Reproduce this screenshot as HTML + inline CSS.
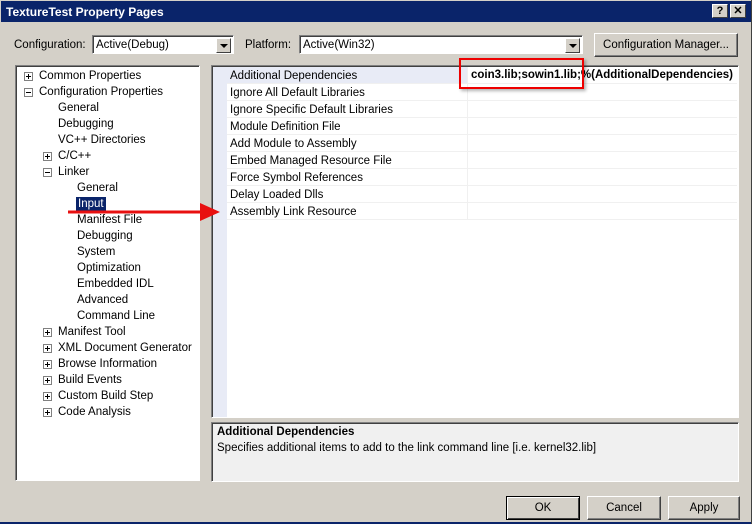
<!DOCTYPE html>
<html><head><style>
*{margin:0;padding:0;box-sizing:border-box}
body{width:752px;height:524px;background:#d4d0c8;font-family:"Liberation Sans",sans-serif;font-size:11.5px;color:#000;position:relative;overflow:hidden}
.a{position:absolute;white-space:nowrap}
.title{left:0;top:0;width:752px;height:23px;background:#0a246a;border:1px solid #d4d0c8;}
.title span{position:absolute;left:5px;top:4px;color:#fff;font-weight:bold;font-size:12px}
.tb{position:absolute;top:3px;width:16px;height:14px;background:#d4d0c8;border:1px solid;border-color:#fff #404040 #404040 #fff;font-size:11px;font-weight:bold;text-align:center;line-height:12px}
.combo{background:#fff;border:1px solid;border-color:#808080 #fff #fff #808080;box-shadow:inset 1px 1px 0 #404040;height:19px;padding:3px 3px}
.dd{position:absolute;right:2px;top:2px;width:15px;height:15px;background:#d4d0c8;border:1px solid;border-color:#fff #404040 #404040 #fff}
.dd:after{content:"";position:absolute;left:3px;top:5px;border:4px solid transparent;border-top:4px solid #000;border-bottom:0}
.btn{background:#d4d0c8;border:1px solid;border-color:#fff #404040 #404040 #fff;box-shadow:inset -1px -1px 0 #808080;text-align:center;line-height:22px;height:24px}
.panel{background:#fff;border:1px solid;border-color:#808080 #fff #fff #808080;box-shadow:inset 1px 1px 0 #404040}
.ex{position:absolute;width:9px;height:9px;border:1px solid #808080;background:#fff}
.ex:before{content:"";position:absolute;left:1px;top:3px;width:5px;height:1px;background:#000}
.ex.p:after{content:"";position:absolute;left:3px;top:1px;width:1px;height:5px;background:#000}
.row{position:absolute;left:227px;width:510px;height:17px;border-bottom:1px solid #f0f0f0}
.row span{position:absolute;left:3px;top:3px}
</style></head><body>
<div class="a title"><span>TextureTest Property Pages</span>
<div class="tb" style="left:711px">?</div><div class="tb" style="left:729px">✕</div></div>
<div class="a" style="left:0;top:522px;width:752px;height:2px;background:#0a246a"></div>
<div class="a" style="left:751px;top:0;width:1px;height:524px;background:#404040"></div>

<div class="a" style="left:14px;top:39px">Configuration:</div>
<div class="a combo" style="left:92px;top:35px;width:142px">Active(Debug)<div class="dd"></div></div>
<div class="a" style="left:245px;top:39px">Platform:</div>
<div class="a combo" style="left:299px;top:35px;width:284px">Active(Win32)<div class="dd"></div></div>
<div class="a btn" style="left:594px;top:33px;width:144px">Configuration Manager...</div>

<div class="a panel" style="left:15px;top:65px;width:185px;height:416px"></div>
<div class="a" style="left:0;top:2px;width:1px;height:1px">
<div class="a ex p" style="left:24px;top:70px"></div><div class="a" style="left:39px;top:68px">Common Properties</div>
<div class="a ex" style="left:24px;top:86px"></div><div class="a" style="left:39px;top:84px">Configuration Properties</div>
<div class="a" style="left:58px;top:100px">General</div>
<div class="a" style="left:58px;top:116px">Debugging</div>
<div class="a" style="left:58px;top:132px">VC++ Directories</div>
<div class="a ex p" style="left:43px;top:150px"></div><div class="a" style="left:58px;top:148px">C/C++</div>
<div class="a ex" style="left:43px;top:166px"></div><div class="a" style="left:58px;top:164px">Linker</div>
<div class="a" style="left:77px;top:180px">General</div>
<div class="a" style="left:76px;top:195px;background:#0a246a;color:#fff;padding:1px 2px;">Input</div>
<div class="a" style="left:77px;top:212px">Manifest File</div>
<div class="a" style="left:77px;top:228px">Debugging</div>
<div class="a" style="left:77px;top:244px">System</div>
<div class="a" style="left:77px;top:260px">Optimization</div>
<div class="a" style="left:77px;top:276px">Embedded IDL</div>
<div class="a" style="left:77px;top:292px">Advanced</div>
<div class="a" style="left:77px;top:308px">Command Line</div>
<div class="a ex p" style="left:43px;top:326px"></div><div class="a" style="left:58px;top:324px">Manifest Tool</div>
<div class="a ex p" style="left:43px;top:342px"></div><div class="a" style="left:58px;top:340px">XML Document Generator</div>
<div class="a ex p" style="left:43px;top:358px"></div><div class="a" style="left:58px;top:356px">Browse Information</div>
<div class="a ex p" style="left:43px;top:374px"></div><div class="a" style="left:58px;top:372px">Build Events</div>
<div class="a ex p" style="left:43px;top:390px"></div><div class="a" style="left:58px;top:388px">Custom Build Step</div>
<div class="a ex p" style="left:43px;top:406px"></div><div class="a" style="left:58px;top:404px">Code Analysis</div>
</div>

<div class="a panel" style="left:211px;top:65px;width:528px;height:353px"></div>
<div class="a" style="left:213px;top:67px;width:14px;height:350px;background:#e8ebf6"></div>
<div class="a" style="left:227px;top:67px;width:240px;height:17px;background:#e8ebf6"></div>
<div class="a" style="left:467px;top:67px;width:1px;height:153px;background:#f0f0f0"></div>
<div class="row" style="top:67px"><span>Additional Dependencies</span></div>
<div class="row" style="top:84px"><span>Ignore All Default Libraries</span></div>
<div class="row" style="top:101px"><span>Ignore Specific Default Libraries</span></div>
<div class="row" style="top:118px"><span>Module Definition File</span></div>
<div class="row" style="top:135px"><span>Add Module to Assembly</span></div>
<div class="row" style="top:152px"><span>Embed Managed Resource File</span></div>
<div class="row" style="top:169px"><span>Force Symbol References</span></div>
<div class="row" style="top:186px"><span>Delay Loaded Dlls</span></div>
<div class="row" style="top:203px"><span>Assembly Link Resource</span></div>
<div class="a" style="left:471px;top:69px;font-weight:bold;font-size:11.5px">coin3.lib;sowin1.lib;%(AdditionalDependencies)</div>
<div class="a" style="left:459px;top:58px;width:125px;height:31px;border:2px solid #e00;box-shadow:2px 2px 3px rgba(0,0,0,.3)"></div>

<svg class="a" style="left:60px;top:200px" width="170" height="28"><line x1="8" y1="12" x2="145" y2="12" stroke="#e81010" stroke-width="3"/><polygon points="140,3 160,12 140,21" fill="#e81010"/></svg>

<div class="a panel" style="left:211px;top:422px;width:528px;height:60px;background:#f0f0f0"></div>
<div class="a" style="left:217px;top:426px;font-weight:bold">Additional Dependencies</div>
<div class="a" style="left:217px;top:442px">Specifies additional items to add to the link command line [i.e. kernel32.lib]</div>

<div class="a btn" style="left:506px;top:496px;width:74px;border:1px solid #000;box-shadow:inset 1px 1px 0 #fff,inset -1px -1px 0 #404040">OK</div>
<div class="a btn" style="left:587px;top:496px;width:74px">Cancel</div>
<div class="a btn" style="left:668px;top:496px;width:72px">Apply</div>
</body></html>
